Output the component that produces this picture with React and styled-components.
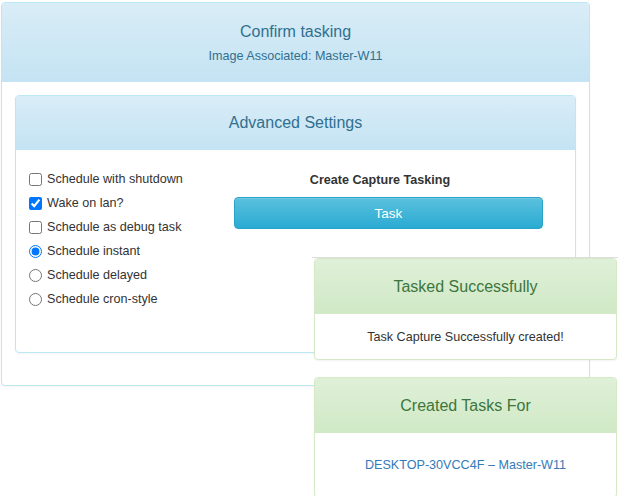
import React from "react";
import styled, { createGlobalStyle } from "styled-components";

const GlobalStyle = createGlobalStyle`
  html, body {
    margin: 0;
    padding: 0;
    background: #fff;
    font-family: "Liberation Sans", Arial, sans-serif;
    color: #333;
  }
`;

const Page = styled.div`
  position: relative;
  width: 618px;
  height: 496px;
  overflow: hidden;
  padding: 2px 0 0 1px;
  box-sizing: border-box;
`;

const Panel = styled.div`
  border: 1px solid ${(p) => (p.$success ? "#d6e9c6" : "#bce8f1")};
  border-radius: 4px;
  background: #fff;
  overflow: hidden;
  box-shadow: 0 1px 2px rgba(0, 0, 0, 0.05);
`;

const OuterPanel = styled(Panel)`
  width: 589px;
  box-sizing: border-box;
`;

const Heading = styled.div`
  text-align: center;
  padding: ${(p) => p.$pad || "17px 0"};
  color: ${(p) => (p.$success ? "#3c763d" : "#31708f")};
  background: ${(p) =>
    p.$success
      ? "linear-gradient(to bottom, #dff0d8 0%, #d0e9c6 100%)"
      : "linear-gradient(to bottom, #d9edf7 0%, #c4e3f3 100%)"};
`;

const Title = styled.div`
  font-size: 16px;
  line-height: 20px;
`;

const SubTitle = styled.div`
  font-size: 12.6px;
  line-height: 16px;
  margin-top: 6px;
`;

const OuterBody = styled.div`
  padding: 13px 13px 12px;
`;

const InnerPanel = styled(Panel)`
  margin-bottom: 20px;
`;

const SettingsBody = styled.div`
  display: flex;
  padding: 17px 13px 41px;
`;

const OptionList = styled.div`
  width: 205px;
  display: flex;
  flex-direction: column;
`;

const Option = styled.label`
  display: flex;
  align-items: center;
  height: 24px;
  font-size: 12.6px;
  color: #333;

  input {
    width: 13px;
    height: 13px;
    margin: 0 5px 0 0;
  }
`;

const TaskColumn = styled.div`
  width: 309px;
  display: flex;
  flex-direction: column;
`;

const TaskLabel = styled.div`
  font-size: 12.6px;
  line-height: 16px;
  font-weight: bold;
  text-align: center;
  margin-top: 5px;
  padding-right: 17px;
`;

const TaskButton = styled.button`
  margin-top: 9px;
  height: 32px;
  width: 100%;
  border: 1px solid #28a4c9;
  border-radius: 4px;
  background: linear-gradient(to bottom, #5bc0de 0%, #2aabd2 100%);
  color: #fff;
  font-family: "Liberation Sans", Arial, sans-serif;
  font-size: 13.5px;
  box-shadow: inset 0 1px 0 rgba(255, 255, 255, 0.15);
`;

const Notices = styled.div`
  position: absolute;
  top: 257px;
  left: 312px;
  right: 0;
  border-top: 1px solid #dddddd;
  padding: 0 1px 0 2px;
`;

const NoticePanel = styled(Panel)`
  margin-bottom: 17px;
`;

const NoticeBody = styled.div`
  text-align: center;
  font-size: 12.6px;
  line-height: 16px;
  padding: ${(p) => p.$pad};
  color: ${(p) => p.$color || "#333"};
`;

const options = [
  { type: "checkbox", label: "Schedule with shutdown" },
  { type: "checkbox", label: "Wake on lan?", checked: true },
  { type: "checkbox", label: "Schedule as debug task" },
  { type: "radio", label: "Schedule instant", checked: true },
  { type: "radio", label: "Schedule delayed" },
  { type: "radio", label: "Schedule cron-style" },
];

export default function App() {
  return (
    <Page>
      <GlobalStyle />
      <OuterPanel>
        <Heading $pad="19px 0 18px">
          <Title>Confirm tasking</Title>
          <SubTitle>Image Associated: Master-W11</SubTitle>
        </Heading>
        <OuterBody>
          <InnerPanel>
            <Heading>
              <Title>Advanced Settings</Title>
            </Heading>
            <SettingsBody>
              <OptionList>
                {options.map((o) => (
                  <Option key={o.label}>
                    <input
                      type={o.type}
                      name={o.type === "radio" ? "sched" : o.label}
                      defaultChecked={o.checked}
                    />
                    {o.label}
                  </Option>
                ))}
              </OptionList>
              <TaskColumn>
                <TaskLabel>Create Capture Tasking</TaskLabel>
                <TaskButton>Task</TaskButton>
              </TaskColumn>
            </SettingsBody>
          </InnerPanel>
        </OuterBody>
      </OuterPanel>

      <Notices>
        <NoticePanel $success>
          <Heading $success $pad="18px 0 17px">
            <Title>Tasked Successfully</Title>
          </Heading>
          <NoticeBody $pad="15px 0 14px">Task Capture Successfully created!</NoticeBody>
        </NoticePanel>
        <NoticePanel $success>
          <Heading $success $pad="18px 0 17px">
            <Title>Created Tasks For</Title>
          </Heading>
          <NoticeBody $pad="24px 0" $color="#337ab7">
            DESKTOP-30VCC4F – Master-W11
          </NoticeBody>
        </NoticePanel>
      </Notices>
    </Page>
  );
}
